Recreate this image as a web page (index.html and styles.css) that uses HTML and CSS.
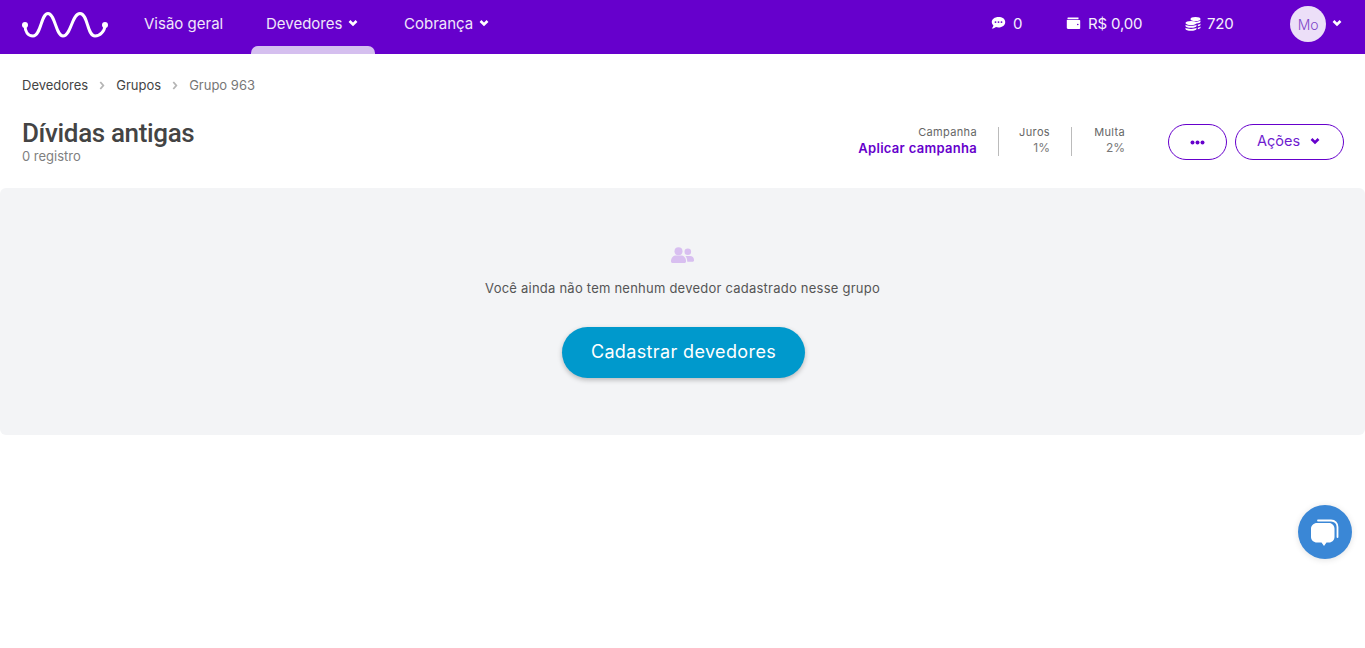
FILE: index.html
```html
<!DOCTYPE html>
<html lang="pt-BR">
<head>
<meta charset="utf-8">
<title>Dívidas antigas</title>
<link rel="stylesheet" href="styles.css">
</head>
<body>
<header class="topbar">
  <svg class="logo" viewBox="0 0 86 26" width="86" height="26" aria-hidden="true">
    <path class="logo-wave" d="M3 13C3 20 6 24 11 24C19 24 19 1.5 26 1.5C33 1.5 34 24 41 24C49 24 50 1.5 58 1.5C66 1.5 65 24 73 24C78 24 83 19 83 13"/>
    <circle class="logo-dot" cx="3" cy="13" r="3"/>
    <circle class="logo-dot" cx="83" cy="13" r="3"/>
  </svg>
  <nav class="mainnav">
    <a class="navitem navitem-first">Visão geral</a>
    <a class="navitem navitem-active">Devedores
      <svg class="chev" viewBox="0 0 10 8" width="10" height="8"><path d="M1.5 2l3.5 3.5L8.5 2"/></svg>
    </a>
    <a class="navitem">Cobrança
      <svg class="chev" viewBox="0 0 10 8" width="10" height="8"><path d="M1.5 2l3.5 3.5L8.5 2"/></svg>
    </a>
  </nav>
  <div class="stats">
    <span class="stat stat-chat">
      <svg viewBox="0 0 16 15" width="15" height="14" class="stat-icon"><path class="fill-white" d="M8 1C3.9 1 .8 3.3.8 6.4c0 1.4.7 2.7 1.8 3.7-.2 1.1-.9 2.3-1.8 3.4 1.900 0 3.500-.7 4.500-1.600.8.2 1.700.4 2.700.4 4.100 0 7.200-2.500 7.200-5.900S12.100 1 8 1z"/><circle class="fill-nav" cx="4.800" cy="6.500" r="1"/><circle class="fill-nav" cx="8" cy="6.500" r="1"/><circle class="fill-nav" cx="11.200" cy="6.500" r="1"/></svg>
      0
    </span>
    <span class="stat stat-wallet">
      <svg viewBox="0 0 15 14" width="15" height="14" class="stat-icon"><path class="fill-white" d="M2 1.500h10.500v1.800H1.500V2c0-.3.200-.5.500-.5zM.8 3.800c.3.200.7.300 1.200.3h11.500c.5 0 .7.300.7.700v7.400c0 .5-.3.800-.8.800H2c-.7 0-1.200-.5-1.200-1.200z"/><circle class="fill-nav" cx="11.800" cy="8.500" r=".8"/></svg>
      R$ 0,00
    </span>
    <span class="stat stat-coins">
      <svg viewBox="0 0 16 15" width="16" height="15" class="stat-icon"><ellipse class="fill-white" cx="10.500" cy="3" rx="5" ry="2"/><path class="fill-white" d="M5.500 5.200c1.500.7 8 .9 10-.7v1.300c0 1-2 1.700-4 1.800-.8-1.100-3.600-1.700-6-2.400zM12.800 8.700c1.200-.2 2.200-.6 2.700-1.200v1.300c0 .6-1.200 1.300-2.700 1.500zM12.800 11.700c1.200-.2 2.200-.6 2.700-1.200v1.300c0 .6-1.200 1.200-2.700 1.500z"/><ellipse class="fill-white" cx="6" cy="7" rx="5.500" ry="2"/><path class="fill-white" d="M.5 8.700c1.500 1.500 9.500 1.500 11 0v1.200c0 1-2.500 1.800-5.500 1.800S.5 10.900.5 9.900zM.5 11.800c1.500 1.500 9.500 1.500 11 0V13c0 1-2.500 1.800-5.500 1.800S.5 14 .5 13z"/></svg>
      720
    </span>
    <span class="avatar">Mo</span>
    <svg class="chev chev-user" viewBox="0 0 10 8" width="10" height="8"><path d="M1.5 2l3.5 3.5L8.5 2"/></svg>
  </div>
</header>

<main class="page">
  <ol class="crumbs">
    <li class="crumb">Devedores</li>
    <li class="crumb-sep"><svg viewBox="0 0 6 9" width="6" height="9"><path d="M1.3 1l3 3.500-3 3.500"/></svg></li>
    <li class="crumb">Grupos</li>
    <li class="crumb-sep"><svg viewBox="0 0 6 9" width="6" height="9"><path d="M1.3 1l3 3.500-3 3.500"/></svg></li>
    <li class="crumb crumb-current">Grupo 963</li>
  </ol>

  <section class="headrow">
    <div class="headtitle">
      <h1 class="title">Dívidas antigas</h1>
      <p class="count">0 registro</p>
    </div>
    <div class="meta">
      <div class="meta-col meta-campaign">
        <span class="meta-label">Campanha</span>
        <a class="meta-link">Aplicar campanha</a>
      </div>
      <div class="meta-col meta-juros">
        <span class="meta-label">Juros</span>
        <span class="meta-value">1%</span>
      </div>
      <div class="meta-col meta-multa">
        <span class="meta-label">Multa</span>
        <span class="meta-value">2%</span>
      </div>
    </div>
    <div class="actions">
      <button class="btn btn-more"><svg viewBox="0 0 15 5" width="15" height="5"><circle cx="2.500" cy="2.500" r="2"/><circle cx="7.500" cy="2.500" r="2"/><circle cx="12.500" cy="2.500" r="2"/></svg></button>
      <button class="btn btn-actions">Ações
        <svg class="chev chev-purple" viewBox="0 0 10 8" width="10" height="8"><path d="M1.5 2l3.500 3.500L8.500 2"/></svg>
      </button>
    </div>
  </section>

  <section class="empty">
    <svg class="empty-icon" viewBox="0 0 23 16" width="23" height="16"><circle cx="7.500" cy="4.300" r="4"/><path d="M0 14c0-3.500 2.500-5.500 5-5.500h5c2.500 0 5 2 5 5.500v.5c0 .8-.7 1.500-1.500 1.500h-12C.7 16 0 15.300 0 14.500z"/><circle cx="16.800" cy="4.800" r="3.300"/><path d="M14.500 9h4.700c2 0 3.800 1.700 3.800 3.700v.9c0 .6-.5 1.100-1.100 1.100h-5.600c-.1-2.200-.7-4.200-1.800-5.700z"/></svg>
    <p class="empty-text">Você ainda não tem nenhum devedor cadastrado nesse grupo</p>
    <button class="cta">Cadastrar devedores</button>
  </section>
</main>

<button class="chatfab" aria-label="Chat">
  <svg viewBox="0 0 28 28" width="28" height="28">
    <path class="fab-back" d="M7 2.500h13c4 0 6.500 3 6.500 6.500v10"/>
    <path class="fab-front" d="M6 5h12c3 0 5.500 2.500 5.500 5.500v8.500c0 3-2.500 5.500-5.500 5.500h-2.500L13 28l-2.500-3.500H6c-3.300 0-6-2.500-6-5.500v-8.500C0 7.500 2.700 5 6 5z"/>
  </svg>
</button>
</body>
</html>
```
FILE: styles.css
```css
* { box-sizing: border-box; }
html, body { margin: 0; padding: 0; height: 100%; overflow: hidden; background: #fff; }
body { font-family: Inter, "Open Sans", sans-serif; color: #444; }

.topbar {
  height: 54px; background: #6600cc; display: flex; align-items: center;
  padding: 0 23px 8px 22px; color: #fff;
}
.logo { display: block; flex: none; margin-top: 4px; overflow: visible; }
.logo-wave { fill: none; stroke: #fff; stroke-width: 3; stroke-linecap: round; }
.logo-dot { fill: #fff; }
.mainnav { display: flex; margin-left: 36px; font-size: 15px; }
.navitem { position: relative; display: flex; align-items: center; gap: 6px; color: #f0e6fa; white-space: nowrap; }
.navitem-first { width: 122px; }
.navitem-active { width: 138px; }
.navitem-active::after {
  content: ""; position: absolute; left: -15px; top: 32px; width: 124px; height: 8px;
  background: #d5bfef; border-radius: 7px 7px 0 0;
}
.chev { flex: none; }
.chev path { fill: none; stroke: #fff; stroke-width: 2.6; }
.chev-purple path { stroke: #6600cc; }
.stats { margin-left: auto; display: flex; align-items: center; font-size: 15px; letter-spacing: -.15px; }
.stat { display: flex; align-items: center; gap: 7px; white-space: nowrap; color: #f6f0fc; }
.stat-chat { width: 75px; }
.stat-wallet { width: 119px; }
.stat-coins { width: 105px; gap: 6px; }
.stat-icon { flex: none; }
.fill-white { fill: #fff; }
.fill-nav { fill: #6600cc; }
.avatar {
  width: 36px; height: 36px; border-radius: 50%; background: #ecdff8; color: #7f48c8;
  display: flex; align-items: center; justify-content: center; font-size: 14px; font-weight: 300; margin-top: 2px;
}
.chev-user { margin-left: 6px; }

.page { display: block; }
.crumbs { list-style: none; margin: 0; padding: 21px 22px 0; display: flex; align-items: center; font-size: 13px; height: 41px; }
.crumb { color: #444; }
.crumb-current { color: #777; }
.crumb-sep { margin: 0 11px; display: flex; }
.crumb-sep path { fill: none; stroke: #b5b5b5; stroke-width: 1.8; }

.headrow { display: flex; align-items: flex-start; padding: 23px 21px 0 22px; height: 93px; }
.headtitle { margin-right: auto; }
.title { margin: 0; font-family: Roboto, sans-serif; font-weight: 500; font-size: 26px; letter-spacing: -.36px; line-height: 30px; color: #444; }
.count { margin: 0; font-size: 13px; line-height: 16px; color: #808080; }
.meta { display: flex; margin-top: 9px; margin-right: 43px; }
.meta-col { display: flex; flex-direction: column; align-items: flex-end; gap: 3px; height: 29px; font-size: 11px; }
.meta-campaign { padding-right: 21px; border-right: 1px solid #bbb; }
.meta-juros { width: 73px; padding-right: 21px; border-right: 1px solid #bbb; }
.meta-multa { width: 53px; }
.meta-label { color: #666; line-height: 10px; letter-spacing: .35px; }
.meta-value { color: #777; font-size: 12px; line-height: 16px; }
.meta-link { color: #6600cc; font-weight: 600; font-size: 13px; line-height: 16px; letter-spacing: .3px; }
.actions { display: flex; gap: 8px; margin-top: 6px; }
.btn {
  height: 36px; border: 1px solid #6600cc; border-radius: 18px; background: #fff;
  display: flex; align-items: center; justify-content: center; font-family: inherit; padding: 0; color: #6f1ccf;
}
.btn-more { width: 59px; }
.btn-more circle { fill: #6600cc; }
.btn-actions { width: 109px; gap: 10px; font-size: 14.5px; padding: 0 2px 3px 0; }

.empty {
  height: 247px; background: #f3f4f6; border-radius: 6px; display: flex; flex-direction: column; align-items: center;
  padding-top: 59px;
}
.empty-icon { display: block; fill: #d8bff0; }
.empty-text { margin: 17px 0 0; font-size: 13px; line-height: 16px; letter-spacing: .23px; color: #555; }
.cta {
  margin: 31px 0 0 2px; height: 51px; width: 243px; border: 0; border-radius: 26px; background: #0099cc; color: #fff;
  font-family: inherit; font-size: 18px; letter-spacing: .37px; padding: 0 0 2px; box-shadow: 0 2px 5px rgba(0,0,0,.25);
}

.chatfab {
  position: fixed; left: 1298px; top: 505px; width: 54px; height: 54px; border-radius: 50%; border: 0; padding: 0;
  background: #3a87d6; display: flex; align-items: center; justify-content: center; box-shadow: 0 1px 6px rgba(0,0,0,.12);
}
.fab-back { fill: none; stroke: #fff; stroke-width: 1.8; stroke-linecap: round; }
.fab-front { fill: #fff; }
```
